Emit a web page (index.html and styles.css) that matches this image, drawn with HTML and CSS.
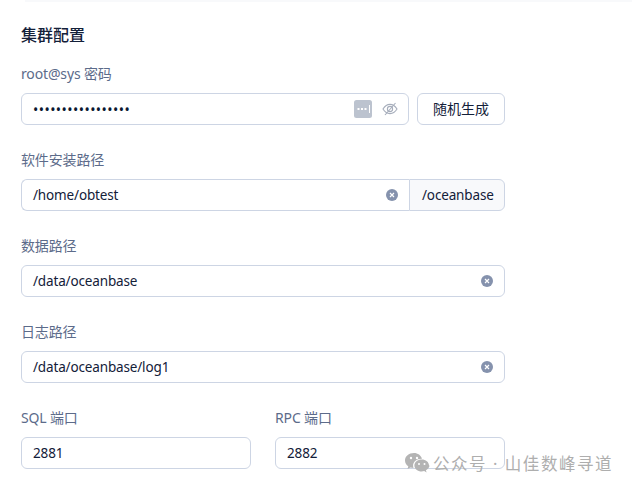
FILE: index.html
```html
<!DOCTYPE html>
<html lang="zh-CN">
<head>
  <meta charset="UTF-8">
  <title>集群配置</title>
  <link rel="stylesheet" href="styles.css">
</head>
<body>
  <div class="topline"></div>
  <div class="form">
    <h3 class="title">集群配置</h3>

    <div class="item">
      <label class="label">root@sys 密码</label>
      <div class="row">
        <div class="input grow">
          <span class="value dots">•••••••••••••••••</span>
          <span class="key-icon">
            <svg width="18" height="18" viewBox="0 0 18 18">
              <rect width="18" height="18" rx="2.5" fill="#bcc3cf"/>
              <rect x="3.5" y="8" width="2" height="2" fill="#fff"/>
              <rect x="7" y="8" width="2" height="2" fill="#fff"/>
              <rect x="10.5" y="8" width="2" height="2" fill="#fff"/>
              <rect x="15" y="5" width="1" height="8" fill="#fff"/>
            </svg>
          </span>
          <svg class="eye" width="16" height="16" viewBox="0 0 16 16" fill="none" stroke="#a6adbb" stroke-width="1.1">
            <path d="M1 8c2-3.2 4.300-4.600 7-4.600S13 4.800 15 8c-2 3.200-4.300 4.600-7 4.600S3 11.200 1 8z"/>
            <circle cx="8" cy="8" r="2.600"/>
            <path d="M3 14L13.500 2"/>
          </svg>
        </div>
        <button class="btn">随机生成</button>
      </div>
    </div>

    <div class="item">
      <label class="label">软件安装路径</label>
      <div class="row joined">
        <div class="input grow">
          <span class="value">/home/obtest</span>
          <svg class="clear" width="12" height="12" viewBox="0 0 12 12"><circle cx="6" cy="6" r="6" fill="#8592ad"/><path d="M4 4l4 4M8 4l-4 4" stroke="#fff" stroke-width="1.200"/></svg>
        </div>
        <span class="addon">/oceanbase</span>
      </div>
    </div>

    <div class="item">
      <label class="label">数据路径</label>
      <div class="input">
        <span class="value">/data/oceanbase</span>
        <svg class="clear" width="12" height="12" viewBox="0 0 12 12"><circle cx="6" cy="6" r="6" fill="#8592ad"/><path d="M4 4l4 4M8 4l-4 4" stroke="#fff" stroke-width="1.200"/></svg>
      </div>
    </div>

    <div class="item">
      <label class="label">日志路径</label>
      <div class="input">
        <span class="value">/data/oceanbase/log1</span>
        <svg class="clear" width="12" height="12" viewBox="0 0 12 12"><circle cx="6" cy="6" r="6" fill="#8592ad"/><path d="M4 4l4 4M8 4l-4 4" stroke="#fff" stroke-width="1.200"/></svg>
      </div>
    </div>

    <div class="ports">
      <div class="item">
        <label class="label">SQL 端口</label>
        <div class="input"><span class="value">2881</span></div>
      </div>
      <div class="item">
        <label class="label">RPC 端口</label>
        <div class="input"><span class="value">2882</span></div>
      </div>
    </div>
  </div>

  <div class="watermark">
    <svg width="26" height="22" viewBox="0 0 26 22">
      <path d="M10 1C4.800 1 1 4.400 1 8.500c0 2.400 1.300 4.400 3.300 5.800L3.500 17l3-1.600c1 .3 2 .5 3 .5-.3-.8-.4-1.500-.4-2.200 0-3.900 3.600-6.900 8.300-6.900h.6C17 3.400 13.800 1 10 1z" fill="#b4b4b4"/>
      <path d="M25 13.500c0-3.400-3.300-6-7.300-6s-7.300 2.600-7.300 6 3.300 6 7.300 6c.8 0 1.700-.1 2.500-.4l2.400 1.400-.7-2.300c2.200-1.200 3.600-2.800 3.600-4.700z" fill="#b4b4b4"/>
      <circle cx="7" cy="6" r="1.200" fill="#fff"/>
      <circle cx="13" cy="6" r="1.200" fill="#fff"/>
      <circle cx="15" cy="12" r="1" fill="#fff"/>
      <circle cx="20.500" cy="12" r="1" fill="#fff"/>
    </svg>
    <span>公众号 · 山佳数峰寻道</span>
  </div>
</body>
</html>
```

FILE: styles.css
```css
* {
  margin: 0;
  padding: 0;
  box-sizing: border-box;
}
body {
  background: #fff;
  font-family: "Noto Sans", "Noto Sans CJK SC", sans-serif;
  font-size: 14px;
  color: #132039;
  position: relative;
  height: 489px;
  overflow: hidden;
}
.topline {
  height: 2px;
  margin-left: 25px;
  background: #f8f9fb;
}
.form {
  width: 484px;
  margin-left: 21px;
  padding-top: 22px;
}
.title {
  font-size: 16px;
  font-weight: 500;
  line-height: 22px;
  margin-bottom: 18px;
}
.item {
  margin-bottom: 25px;
}
.label {
  display: block;
  color: #5c6b8a;
  line-height: 20px;
  margin-bottom: 9px;
  letter-spacing: -0.15px;
}
.row {
  display: flex;
  gap: 8px;
}
.row.joined {
  gap: 0;
}
.grow {
  flex: 1;
}
.input {
  height: 32px;
  border: 1px solid #cdd5e4;
  border-radius: 6px;
  display: flex;
  align-items: center;
  padding: 0 11px;
  background: #fff;
  font-size: 13.5px;
  letter-spacing: -0.15px;
}
.value {
  flex: 1;
}
.dots {
  letter-spacing: 0.45px;
  font-size: 14px;
  color: #0b1730;
}
.key-icon {
  display: flex;
  margin-right: 10px;
}
.eye {
  margin-right: -1px;
}
.clear {
  margin-right: 0;
}
.btn {
  width: 88px;
  height: 32px;
  border: 1px solid #cdd5e4;
  border-radius: 6px;
  background: #fff;
  font: inherit;
  color: #132039;
  padding-bottom: 2px;
}
.joined .input {
  border-radius: 6px 0 0 6px;
  border-right: 0;
}
.addon {
  width: 96px;
  height: 32px;
  border: 1px solid #cdd5e4;
  border-radius: 0 6px 6px 0;
  background: #f8f9fb;
  display: flex;
  align-items: center;
  padding-left: 12px;
  font-size: 13.5px;
  letter-spacing: -0.15px;
}
.ports {
  display: grid;
  grid-template-columns: 230px 230px;
  column-gap: 24px;
}
.watermark {
  position: absolute;
  left: 404px;
  top: 451px;
  display: flex;
  align-items: center;
  gap: 3px;
  font-size: 16.5px;
  color: #aeaeae;
  letter-spacing: 1.55px;
}
```
